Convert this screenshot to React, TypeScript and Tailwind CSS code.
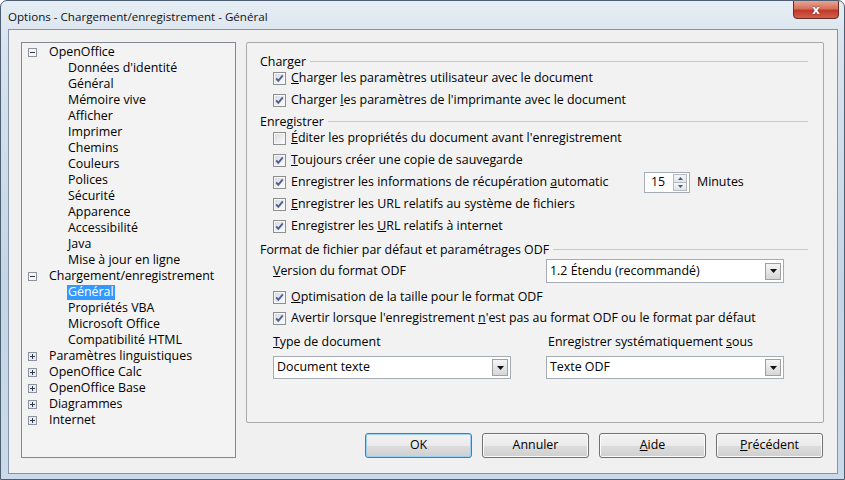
import React from 'react';

type Node = { label: string; level: 0 | 1; exp?: '+' | '-'; selected?: boolean };

const tree: Node[] = [
  { label: 'OpenOffice', level: 0, exp: '-' },
  { label: "Données d'identité", level: 1 },
  { label: 'Général', level: 1 },
  { label: 'Mémoire vive', level: 1 },
  { label: 'Afficher', level: 1 },
  { label: 'Imprimer', level: 1 },
  { label: 'Chemins', level: 1 },
  { label: 'Couleurs', level: 1 },
  { label: 'Polices', level: 1 },
  { label: 'Sécurité', level: 1 },
  { label: 'Apparence', level: 1 },
  { label: 'Accessibilité', level: 1 },
  { label: 'Java', level: 1 },
  { label: 'Mise à jour en ligne', level: 1 },
  { label: 'Chargement/enregistrement', level: 0, exp: '-' },
  { label: 'Général', level: 1, selected: true },
  { label: 'Propriétés VBA', level: 1 },
  { label: 'Microsoft Office', level: 1 },
  { label: 'Compatibilité HTML', level: 1 },
  { label: 'Paramètres linguistiques', level: 0, exp: '+' },
  { label: 'OpenOffice Calc', level: 0, exp: '+' },
  { label: 'OpenOffice Base', level: 0, exp: '+' },
  { label: 'Diagrammes', level: 0, exp: '+' },
  { label: 'Internet', level: 0, exp: '+' },
];

function Expander({ sign }: { sign: '+' | '-' }) {
  return (
    <svg width="9" height="9" viewBox="0 0 9 9" className="flex-none">
      <rect x="0.5" y="0.5" width="8" height="8" fill={sign === '+' ? '#e9edf3' : '#f7f7f7'} stroke="#8f9296" />
      <path d="M2 4.5h5" stroke="#2c3a55" strokeWidth="1" />
      {sign === '+' && <path d="M4.5 2v5" stroke="#2c3a55" strokeWidth="1" />}
    </svg>
  );
}

function Check({ checked }: { checked: boolean }) {
  return (
    <svg width="13" height="13" viewBox="0 0 13 13" className="flex-none">
      <defs>
        <linearGradient id="cbfill" x1="0" y1="0" x2="1" y2="1">
          <stop offset="0" stopColor="#d9dbde" />
          <stop offset="1" stopColor="#fafafa" />
        </linearGradient>
      </defs>
      <rect x="0.5" y="0.5" width="12" height="12" fill="#f6f6f6" stroke="#8e8f8f" />
      <rect x="2" y="2" width="9" height="9" fill="url(#cbfill)" />
      {checked && <path d="M3.2 6.4 L5.3 8.8 L9.8 3.4" fill="none" stroke="#4b5e98" strokeWidth="1.9" />}
    </svg>
  );
}

function Row({ checked, children, className = '' }: { checked: boolean; children: React.ReactNode; className?: string }) {
  return (
    <div className={`flex items-center h-[16px] pl-[26px] gap-[5px] ${className}`}>
      <Check checked={checked} />
      <span className="whitespace-nowrap">{children}</span>
    </div>
  );
}

function Header({ children, className = '' }: { children: React.ReactNode; className?: string }) {
  return (
    <div className={`flex items-center h-[16px] pl-[13px] pr-[15px] ${className}`}>
      <span className="whitespace-nowrap">{children}</span>
      <div className="flex-1 h-px bg-[#c8c8c8] ml-[4px] -mt-[1px]" />
    </div>
  );
}

function Select({ value }: { value: string }) {
  return (
    <div className="flex items-center w-[238px] h-full bg-white border border-[#a5acb5] pl-[3px] pr-[2px]">
      <span className="flex-1 whitespace-nowrap">{value}</span>
      <div className="flex items-center justify-center w-[16px] h-[17px] border border-[#a0a0a0] bg-gradient-to-b from-[#f6f6f6] to-[#d6d6d6]">
        <svg width="7" height="4" viewBox="0 0 7 4">
          <path d="M0 0h7L3.5 4z" fill="#111" />
        </svg>
      </div>
    </div>
  );
}

function Button({ children, focused }: { children: React.ReactNode; focused?: boolean }) {
  return (
    <div
      className={`flex items-center justify-center w-[107px] h-[25px] rounded-[3px] border ${
        focused ? 'border-[#3c7fb1] shadow-[inset_0_0_0_1px_#9ad3f5]' : 'border-[#707070] shadow-[inset_0_0_0_1px_#fcfcfc]'
      } bg-[linear-gradient(#f2f2f2_0%,#ebebeb_50%,#dddddd_51%,#cfcfcf_100%)]`}
    >
      {children}
    </div>
  );
}

export default function App() {
  return (
    <div className="w-[845px] h-[480px] overflow-hidden rounded-t-[7px] border border-[#4d5e70] bg-[linear-gradient(#e6edf4_0%,#d8e3ee_10%,#c4d5e7_60%,#cadaea_100%)] font-['Open_Sans','Noto_Sans',sans-serif] text-[12.4px] text-black leading-none">
      <div className="flex items-start justify-between h-[28px] pl-[7px] pr-[5px]">
        <span className="mt-[10px] text-[11.6px] text-[#111]">Options - Chargement/enregistrement - Général</span>
        <div className="flex items-center justify-center w-[46px] h-[19px] -mt-px rounded-b-[4px] border border-[#6b2a22] bg-[linear-gradient(#e8a594_0%,#d5705c_45%,#c2392a_55%,#d0604a_100%)]">
          <span className="text-white font-bold text-[13px] [text-shadow:0_0_2px_#5a1a10]">x</span>
        </div>
      </div>

      <div className="ml-[7px] w-[830px] h-[445px] border border-[#8494a6] bg-[#f0f0f0] pt-[12px] pl-[12px] flex">
        <div className="w-[215px] h-[416px] border border-[#828790] bg-[#f3f3f3] pt-[1px]">
          {tree.map((n, i) => (
            <div key={i} className={`flex items-center h-[16px] ${n.level === 0 ? 'pl-[6px]' : 'pl-[45px]'}`}>
              {n.exp && <Expander sign={n.exp} />}
              <span
                className={`whitespace-nowrap ${n.level === 0 ? 'ml-[11px]' : ''} ${
                  n.selected ? 'bg-[#3399ff] text-white px-[1px] h-[15px] flex items-center' : 'px-[1px]'
                }`}
              >
                {n.label}
              </span>
            </div>
          ))}
        </div>

        <div className="ml-[10px] w-[578px] flex flex-col">
          <div className="h-[381px] border border-[#a9a9a9] rounded-[2px] bg-[#f2f2f2] pt-[11px]">
            <Header>Charger</Header>
            <Row checked>
              <u>C</u>harger les paramètres utilisateur avec le document
            </Row>
            <Row checked className="mt-[6px]">
              Charger <u>l</u>es paramètres de l'imprimante avec le document
            </Row>
            <Header className="mt-[6px]">Enregistrer</Header>
            <Row checked={false}>
              <u>É</u>diter les propriétés du document avant l'enregistrement
            </Row>
            <Row checked className="mt-[6px]">
              <u>T</u>oujours créer une copie de sauvegarde
            </Row>
            <div className="flex items-center h-[16px] pl-[26px] mt-[6px]">
              <Check checked />
              <span className="ml-[5px] w-[353px] whitespace-nowrap">
                Enregistrer les informations de récupération <u>a</u>utomatic
              </span>
              <div className="flex items-center w-[46px] h-[21px] bg-white border border-[#a5acb5] pl-[6px] pr-[2px]">
                <span className="flex-1">15</span>
                <div className="flex flex-col w-[14px] h-[17px] border border-[#b5b9c0]">
                  <div className="flex-1 flex items-center justify-center bg-gradient-to-b from-[#f4f6f9] to-[#dfe4ec] border-b border-[#b5b9c0]">
                    <svg width="5" height="3" viewBox="0 0 5 3"><path d="M0 3h5L2.5 0z" fill="#4a5a78" /></svg>
                  </div>
                  <div className="flex-1 flex items-center justify-center bg-gradient-to-b from-[#f4f6f9] to-[#dfe4ec]">
                    <svg width="5" height="3" viewBox="0 0 5 3"><path d="M0 0h5L2.5 3z" fill="#4a5a78" /></svg>
                  </div>
                </div>
              </div>
              <span className="ml-[7px]">Minutes</span>
            </div>
            <Row checked className="mt-[6px]">
              <u>E</u>nregistrer les URL relatifs au système de fichiers
            </Row>
            <Row checked className="mt-[6px]">
              Enregistrer les <u>U</u>RL relatifs à internet
            </Row>
            <Header className="mt-[8px]">Format de fichier par défaut et paramétrages ODF</Header>
            <div className="flex items-center h-[24px] mt-px pl-[26px]">
              <span className="w-[273px] whitespace-nowrap">
                <u>V</u>ersion du format ODF
              </span>
              <Select value="1.2 Étendu (recommandé)" />
            </div>
            <Row checked className="mt-[6px]">
              <u>O</u>ptimisation de la taille pour le format ODF
            </Row>
            <Row checked className="mt-[5px]">
              Avertir lorsque l'enregistrement <u>n</u>'est pas au format ODF ou le format par défaut
            </Row>
            <div className="flex items-center h-[16px] mt-[8px] pl-[26px]">
              <span className="w-[275px] whitespace-nowrap">
                <u>T</u>ype de document
              </span>
              <span className="whitespace-nowrap">
                Enregistrer systématiquement <u>s</u>ous
              </span>
            </div>
            <div className="flex items-center h-[23px] mt-[6px] pl-[26px] gap-[35px]">
              <Select value="Document texte" />
              <Select value="Texte ODF" />
            </div>
          </div>

          <div className="flex justify-end gap-[10px] mt-[10px] pr-[1px]">
            <Button focused>OK</Button>
            <Button>Annuler</Button>
            <Button>
              <span>
                <u>A</u>ide
              </span>
            </Button>
            <Button>
              <span>
                <u>P</u>récédent
              </span>
            </Button>
          </div>
        </div>
      </div>
    </div>
  );
}
